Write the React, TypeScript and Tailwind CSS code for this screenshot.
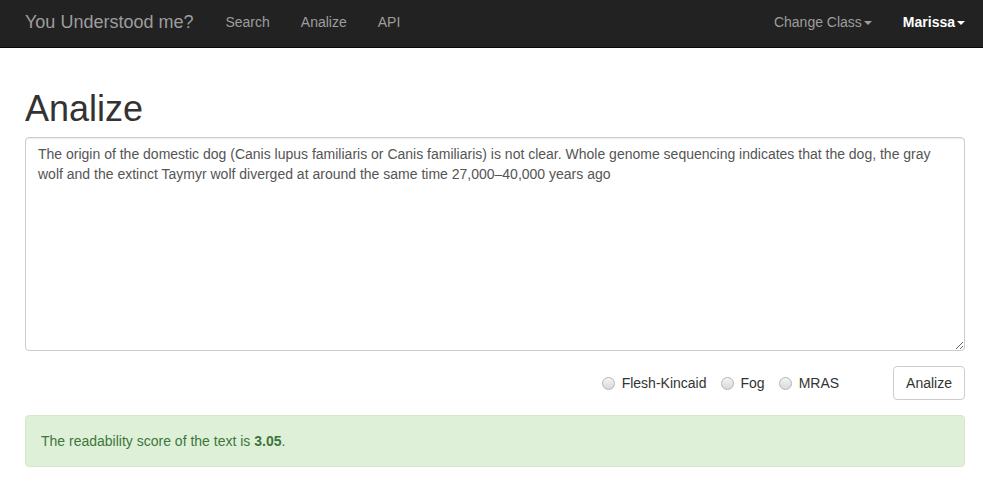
import React from 'react';

const Caret = () => (
  <span className="ml-[2px] inline-block h-0 w-0 border-x-[4px] border-t-[4px] border-x-transparent border-t-current align-middle" />
);

const Radio = ({ label }: { label: string }) => (
  <label className="flex items-center gap-[7px] text-[14px] text-[#333]">
    <span className="inline-block h-[13px] w-[13px] rounded-full border border-[#b5b5b5] bg-gradient-to-b from-[#f4f4f4] to-[#d9d9d9]" />
    {label}
  </label>
);

export default function App() {
  return (
    <div className="min-h-[483px] bg-white" style={{ fontFamily: '"Liberation Sans", Arial, sans-serif' }}>
      {/* Navbar */}
      <nav className="flex h-[48px] items-center justify-between border-b border-[#080808] bg-[#222] pb-[2px] pl-[25px] pr-[18px]">
        <div className="flex items-center">
          <span className="text-[18px] text-[#9d9d9d]">You Understood me?</span>
          <div className="ml-[17px] flex text-[14px] text-[#9d9d9d]">
            <span className="px-[15px]">Search</span>
            <span className="px-[16px]">Analize</span>
            <span className="px-[15px]">API</span>
          </div>
        </div>
        <div className="flex items-center gap-[31px] text-[14px]">
          <span className="flex items-center text-[#9d9d9d]">
            Change Class
            <Caret />
          </span>
          <span className="flex items-center font-bold text-white">
            Marissa
            <Caret />
          </span>
        </div>
      </nav>

      {/* Content */}
      <main className="pl-[25px] pr-[18px]">
        <h1 className="mt-[41px] mb-[8px] text-[36px] leading-[40px] text-[#333]">Analize</h1>
        <textarea
          className="block h-[214px] w-full resize-y rounded-[4px] border border-[#ccc] px-[12px] py-[6px] text-[14px] leading-[20px] text-[#555] shadow-[inset_0_1px_1px_rgba(0,0,0,0.075)] outline-none"
          defaultValue="The origin of the domestic dog (Canis lupus familiaris or Canis familiaris) is not clear. Whole genome sequencing indicates that the dog, the gray wolf and the extinct Taymyr wolf diverged at around the same time 27,000–40,000 years ago"
        />
        <div className="mt-[15px] flex items-center justify-end">
          <div className="flex items-center gap-[14px]">
            <Radio label="Flesh-Kincaid" />
            <Radio label="Fog" />
            <Radio label="MRAS" />
          </div>
          <button className="ml-[54px] h-[34px] rounded-[4px] border border-[#ccc] bg-white px-[12px] text-[14px] text-[#333]">
            Analize
          </button>
        </div>
        <div className="mt-[15px] rounded-[4px] border border-[#d6e9c6] bg-[#dff0d8] p-[15px] text-[14px] leading-[20px] text-[#3c763d]">
          The readability score of the text is <b>3.05</b>.
        </div>
      </main>
    </div>
  );
}
